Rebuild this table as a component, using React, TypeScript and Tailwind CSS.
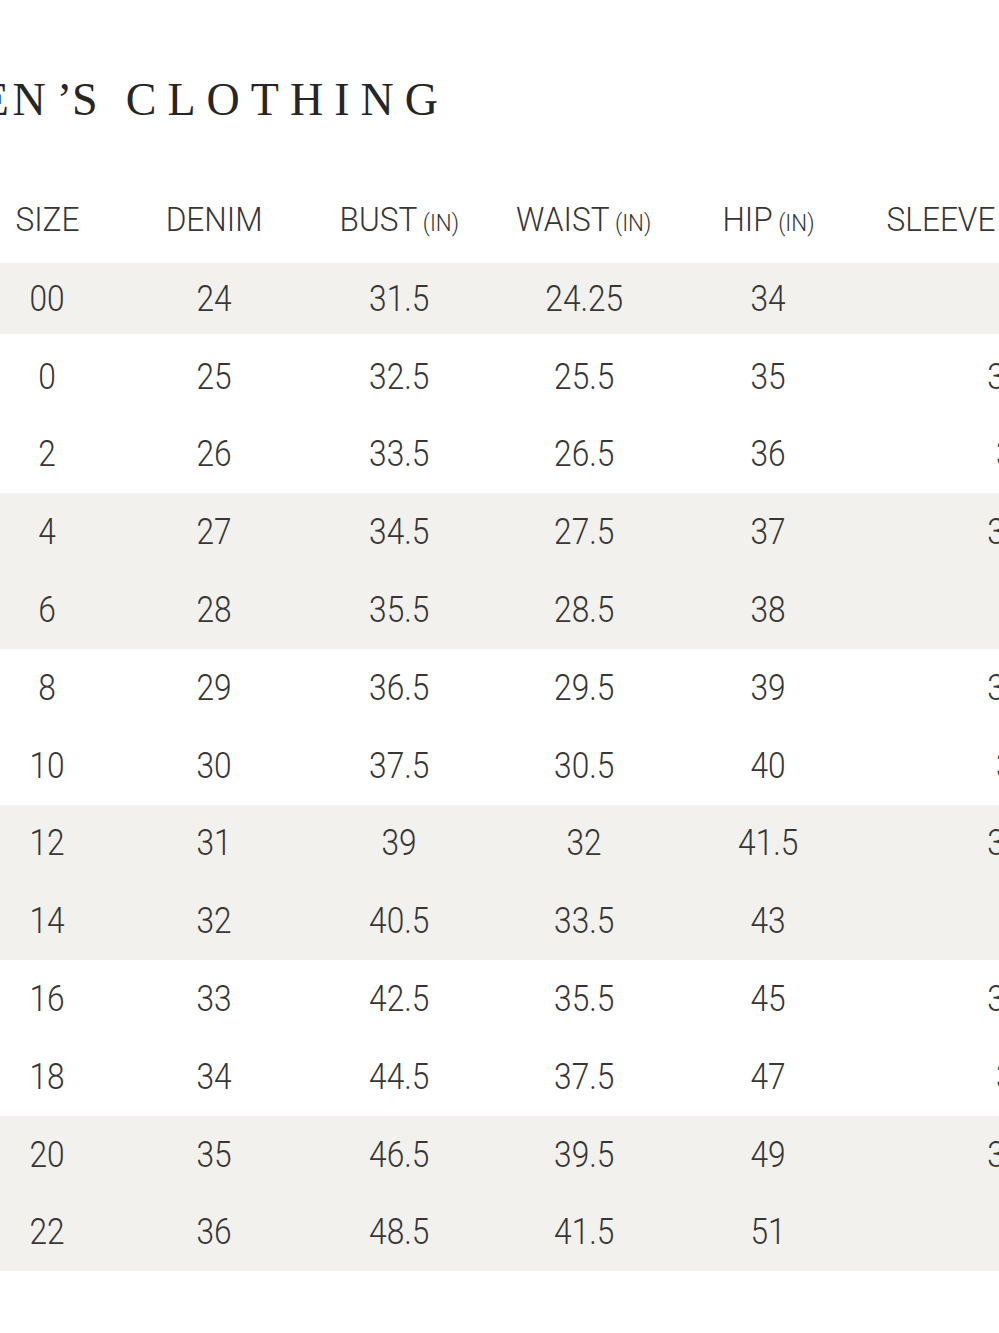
import React from 'react'

type Col = { key: string; label: string; unit?: boolean; width: string }

const cols: Col[] = [
  { key: 'size', label: 'SIZE', width: 'w-[94px]' },
  { key: 'denim', label: 'DENIM', width: 'w-[240px]' },
  { key: 'bust', label: 'BUST', unit: true, width: 'w-[130px]' },
  { key: 'waist', label: 'WAIST', unit: true, width: 'w-[240px]' },
  { key: 'hip', label: 'HIP', unit: true, width: 'w-[128px]' },
  { key: 'sleeve', label: 'SLEEVE LENGTH', unit: true, width: 'w-[388px]' },
]

const rows = [
  ['00', '24', '31.5', '24.25', '34', '31'],
  ['0', '25', '32.5', '25.5', '35', '31.25'],
  ['2', '26', '33.5', '26.5', '36', '31.5'],
  ['4', '27', '34.5', '27.5', '37', '31.75'],
  ['6', '28', '35.5', '28.5', '38', '32'],
  ['8', '29', '36.5', '29.5', '39', '32.25'],
  ['10', '30', '37.5', '30.5', '40', '32.5'],
  ['12', '31', '39', '32', '41.5', '32.75'],
  ['14', '32', '40.5', '33.5', '43', '33'],
  ['16', '33', '42.5', '35.5', '45', '33.25'],
  ['18', '34', '44.5', '37.5', '47', '33.5'],
  ['20', '35', '46.5', '39.5', '49', '33.75'],
  ['22', '36', '48.5', '41.5', '51', '34'],
]

// first row shaded on its own, then shading alternates in pairs
const isShaded = (i: number) => i === 0 || Math.floor((i - 1) / 2) % 2 === 1

export default function App() {
  return (
    <div className="min-h-[1333px] w-full overflow-hidden bg-white font-['Roboto',sans-serif] text-[#363636]">
      {/* Title */}
      <h1 className="-ml-[170px] mt-[77px] whitespace-nowrap font-['Liberation_Serif',serif] text-[46px] font-normal leading-none tracking-[0.24em] text-[#262626]">
        WOM<span className="tracking-[0.08em]">E</span>N<span className="tracking-normal">’</span>S
        <span className="tracking-[0.12em]"> </span>CLOTHING
      </h1>

      {/* Header */}
      <div className="mt-[54px] flex h-[83px] items-center">
        {cols.map((col) => (
          <div key={col.key} className={`${col.width} flex shrink-0 justify-center`}>
            <span className="inline-block scale-x-[0.93] whitespace-nowrap text-[34px] font-light leading-none">
              {col.label}
              {col.unit && <span className="text-[24px]"> (IN)</span>}
            </span>
          </div>
        ))}
      </div>

      {/* Rows */}
      <div className="flex flex-col">
        {rows.map((row, i) => (
          <div
            key={row[0]}
            className={`flex items-center ${i === 0 ? 'my-[3.4px] h-[71px]' : 'h-[77.8px]'} ${
              isShaded(i) ? 'bg-[#f2f1ed]' : 'bg-white'
            }`}
          >
            {row.map((val, j) => (
              <div key={cols[j].key} className={`${cols[j].width} flex shrink-0 justify-center`}>
                <span className="inline-block scale-x-[0.88] whitespace-nowrap text-[36px] font-light leading-none">
                  {val}
                </span>
              </div>
            ))}
          </div>
        ))}
      </div>
    </div>
  )
}
